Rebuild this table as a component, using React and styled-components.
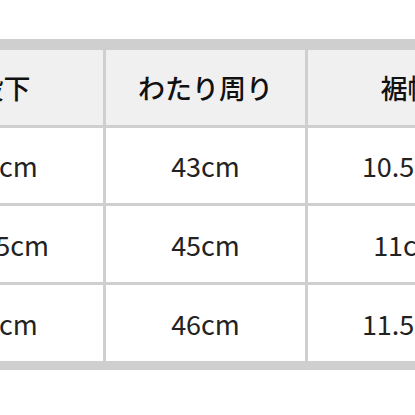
import React from "react";
import styled, { createGlobalStyle } from "styled-components";

const headers = ["股下", "わたり周り", "裾幅"];
const rows = [
    ["72cm", "43cm", "10.5cm"],
    ["72.5cm", "45cm", "11cm"],
    ["73cm", "46cm", "11.5cm"],
];

function App() {
    return (
        <>
            <GlobalStyle />
            <Page>
                <SizeTable>
                    {headers.map((h) => (
                        <HeadCell key={h}>{h}</HeadCell>
                    ))}
                    {rows.map((row, i) =>
                        row.map((value, j) => (
                            <Cell key={`${i}-${j}`}>{value}</Cell>
                        ))
                    )}
                </SizeTable>
            </Page>
        </>
    );
}

const GlobalStyle = createGlobalStyle`
    * {
        box-sizing: border-box;
    }
    html, body {
        margin: 0;
        padding: 0;
        background: #fff;
        overflow: hidden;
    }
    body {
        font-family: "Noto Sans CJK JP", "Noto Sans", sans-serif;
        color: #222;
    }
`;

const Page = styled.div`
    width: 415px;
    height: 415px;
    padding-top: 39px;
    overflow: hidden;
`;

const SizeTable = styled.div`
    display: grid;
    grid-template-columns: repeat(3, 199px);
    grid-template-rows: 75px 75px 76px 76px;
    gap: 3px;
    width: max-content;
    margin-left: -96px;
    background: #cfcfcf;
    border-top: 11px solid #cfcfcf;
    border-bottom: 9px solid #cfcfcf;
`;

const Cell = styled.div`
    display: flex;
    align-items: center;
    justify-content: center;
    background: #fff;
    font-size: 27px;
    font-weight: 400;
    white-space: nowrap;
`;

const HeadCell = styled(Cell)`
    background: #f0f0f0;
    font-weight: 500;
    color: #111;
`;

export default App;
